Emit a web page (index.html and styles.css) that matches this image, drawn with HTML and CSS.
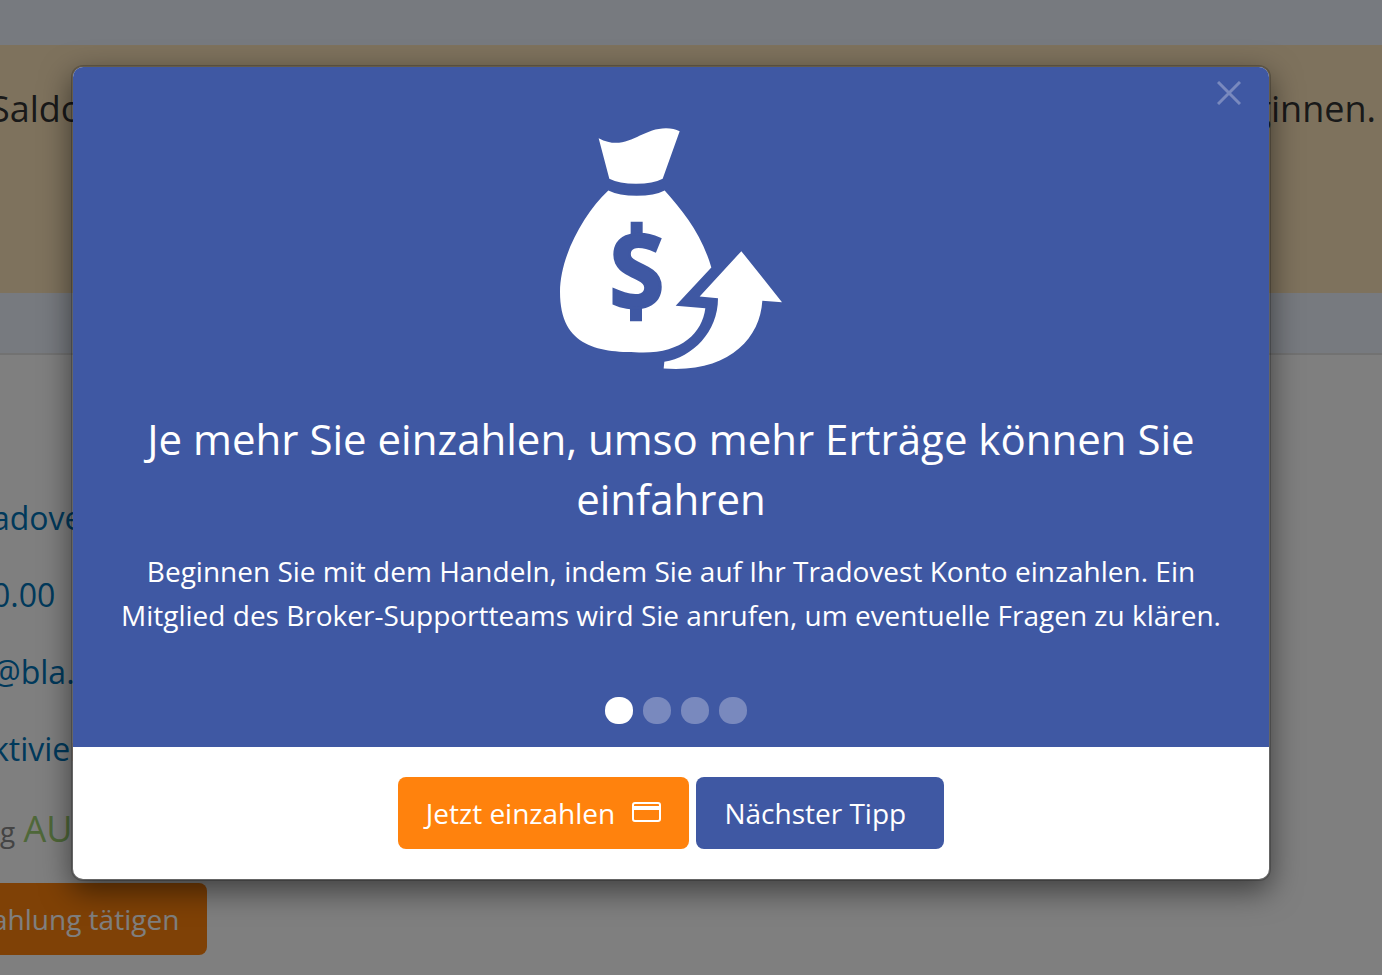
FILE: index.html
```html
<!DOCTYPE html>
<html lang="de">
<head>
    <meta charset="UTF-8">
    <meta name="viewport" content="width=device-width, initial-scale=1.0">
    <title>Tradovest</title>
    <link rel="stylesheet" href="styles.css">
</head>
<body>

<div class="page">
    <div class="topbar"></div>
    <div class="notice">
        <span>Saldo</span>
        <span>beginnen.</span>
    </div>
    <div class="subbar"></div>
    <div class="account">
        <div class="row">adove</div>
        <div class="row">0.00</div>
        <div class="row">@bla.</div>
        <div class="row">ktivier</div>
        <div class="row trading"><small>g</small> <span class="state">AUS</span></div>
        <button class="btn btn-orange deposit">ahlung tätigen</button>
    </div>
</div>

<div class="backdrop">
    <div class="modal" role="dialog" aria-labelledby="tip-title">
        <div class="tip">
            <button class="close" aria-label="Schließen">
                <svg viewBox="0 0 24 24"><path d="M1 1L23 23M23 1L1 23"/></svg>
            </button>
            <svg class="moneybag" viewBox="60 54 666 722">
                <path d="M176 84C260 128 300 54 378 54Q402 54 419 63L368 206Q340 221 288 221Q237 221 208 206Z"/>
                <path d="M205 241Q237 257 290 257Q344 257 374 241C430 303 486 375 514 472L407 587L496 594C487 669 424 727 310 727C180 727 60 715 60 545C60 440 130 311 205 241Z"/>
                <path d="M604 423L726 576L667 572C660 690 560 790 371 775L373 755C458 741 534 665 534 564L479 559Z"/>
                <g class="dollar">
                    <path d="M272 335H308V385H272ZM270 585H306V633H270Z"/>
                    <text x="290" y="592" text-anchor="middle">S</text>
                </g>
            </svg>
            <h2 id="tip-title">Je mehr Sie einzahlen, umso mehr Erträge können Sie einfahren</h2>
            <p>Beginnen Sie mit dem Handeln, indem Sie auf Ihr Tradovest Konto einzahlen. Ein Mitglied des Broker-Supportteams wird Sie anrufen, um eventuelle Fragen zu klären.</p>
            <div class="dots">
                <button class="dot active" aria-label="Tipp 1"></button>
                <button class="dot" aria-label="Tipp 2"></button>
                <button class="dot" aria-label="Tipp 3"></button>
                <button class="dot" aria-label="Tipp 4"></button>
            </div>
        </div>
        <div class="actions">
            <button class="btn btn-orange">Jetzt einzahlen
                <svg class="card" viewBox="0 0 30 20"><rect x="2" y="1" width="27" height="18" rx="2"/><path d="M2 6H29"/></svg>
            </button>
            <button class="btn btn-blue">Nächster Tipp</button>
        </div>
    </div>
</div>

</body>
</html>
```
FILE: styles.css
```css
* {
    box-sizing: border-box;
}
body {
    margin: 0;
    min-height: 100vh;
    overflow: hidden;
    font-family: "Open Sans", "Noto Sans", sans-serif;
    background-color: #fff;
}
button {
    font-family: inherit;
    border: none;
    cursor: pointer;
}

/* page behind the dialog */
.page {
    height: 100vh;
    overflow: hidden;
}
.topbar {
    height: 45px;
    background-color: #eef5ff;
}
.notice {
    display: flex;
    justify-content: space-between;
    height: 248px;
    margin-left: -10px;
    padding: 40px 6px 0 0;
    font-size: 36px;
    line-height: 48px;
    color: #333;
    background-color: #fce5bb;
}
.subbar {
    height: 62px;
    border-bottom: 2px solid #e5e5e5;
    background-color: #eef5ff;
}
.account {
    margin-left: -8px;
    padding-top: 124px;
}
.row {
    height: 77px;
    font-size: 32px;
    line-height: 77px;
    color: #0073b7;
}
.trading {
    height: 80px;
    padding: 3px 0 0 8px;
    color: #888;
}
.trading small {
    font-size: 28px;
}
.state {
    font-size: 36px;
    color: #9fd073;
}

.btn {
    height: 72px;
    padding: 0 28px;
    font-size: 28px;
    line-height: 40px;
    color: #fff;
    border-radius: 8px;
}
.btn-orange {
    background-color: #ff820d;
}
.btn-blue {
    background-color: #3f58a3;
}
.deposit {
    display: block;
    margin-top: 16px;
    padding-left: 0;
}

/* dialog */
.backdrop {
    position: absolute;
    inset: 0;
    padding: 65px 111px 0 71px;
    background-color: rgba(0, 0, 0, 0.5);
}
.modal {
    border: 2px solid rgba(0, 0, 0, 0.2);
    border-radius: 12px;
    background-color: #fff;
    background-clip: padding-box;
    box-shadow: 0 10px 30px rgba(0, 0, 0, 0.5);
}
.tip {
    position: relative;
    display: flex;
    flex-direction: column;
    align-items: center;
    padding: 61px 40px 23px;
    text-align: center;
    color: #fff;
    border-radius: 10px 10px 0 0;
    background-color: #3f58a3;
}
.close {
    position: absolute;
    top: 14px;
    right: 28px;
    width: 24px;
    height: 24px;
    padding: 0;
    background: none;
}
.close svg {
    display: block;
    fill: none;
    stroke: #7989be;
    stroke-width: 3;
}
.moneybag {
    width: 222px;
    height: 241px;
    fill: #fff;
}
.dollar {
    fill: #3f58a3;
    font-size: 300px;
    font-weight: 700;
}
.dollar text {
    stroke: #3f58a3;
    stroke-width: 8;
}
.tip h2 {
    margin: 40px 0 0;
    font-size: 42px;
    font-weight: 400;
    line-height: 60px;
}
.tip p {
    margin: 20px 0 0;
    font-size: 28px;
    line-height: 44px;
}
.dots {
    display: flex;
    gap: 10px;
    margin: 60px 0 0 10px;
}
.dot {
    width: 28px;
    height: 27px;
    padding: 0;
    border-radius: 13px;
    background-color: #7989be;
}
.dot.active {
    background-color: #fff;
}
.actions {
    display: flex;
    justify-content: center;
    gap: 7px;
    padding: 30px;
}
.card {
    width: 30px;
    height: 20px;
    margin-left: 9px;
    vertical-align: 2px;
    fill: none;
    stroke: #fff;
    stroke-width: 2;
}
.card path {
    stroke-width: 4;
}
.btn-blue {
    padding-right: 38px;
}
```
